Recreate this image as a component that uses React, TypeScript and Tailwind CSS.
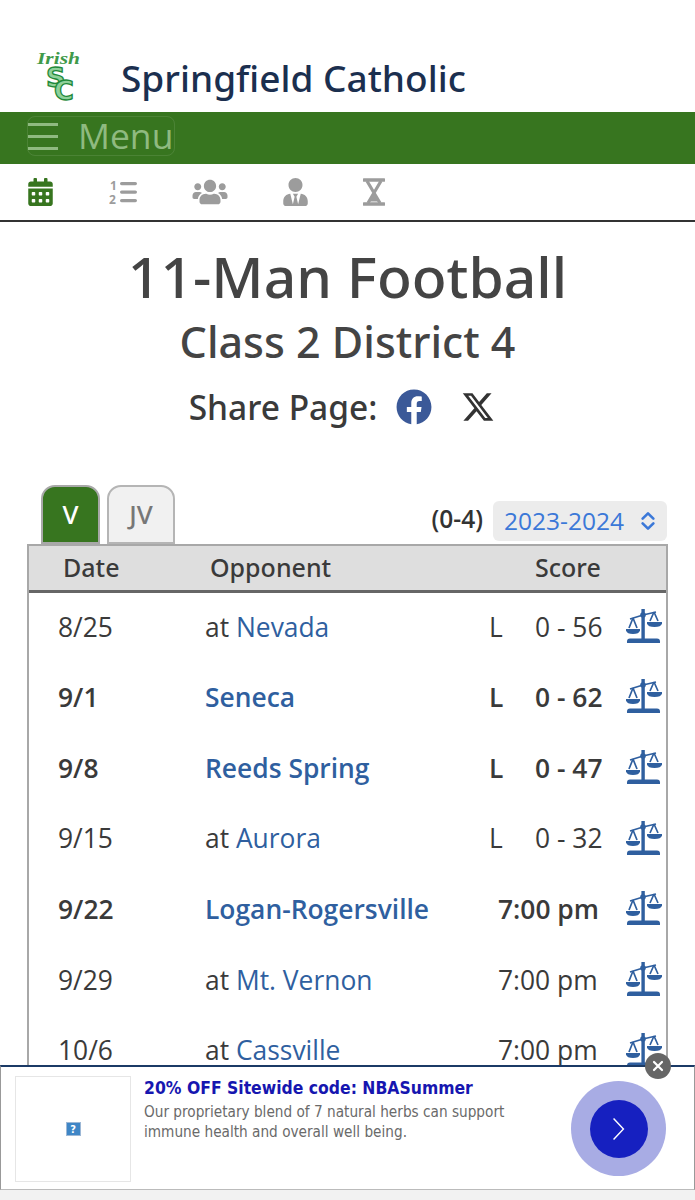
import React from 'react';
import { FaCalendarAlt, FaFacebook, FaUsers, FaUserTie } from 'react-icons/fa';
import { FaXTwitter } from 'react-icons/fa6';

interface Game {
  date: string;
  prefix?: string;
  opponent: string;
  result?: string;
  score: string;
  home?: boolean;
}

const games: Game[] = [
  { date: '8/25', prefix: 'at', opponent: 'Nevada', result: 'L', score: '0 - 56' },
  { date: '9/1', opponent: 'Seneca', result: 'L', score: '0 - 62', home: true },
  { date: '9/8', opponent: 'Reeds Spring', result: 'L', score: '0 - 47', home: true },
  { date: '9/15', prefix: 'at', opponent: 'Aurora', result: 'L', score: '0 - 32' },
  { date: '9/22', opponent: 'Logan-Rogersville', score: '7:00 pm', home: true },
  { date: '9/29', prefix: 'at', opponent: 'Mt. Vernon', score: '7:00 pm' },
  { date: '10/6', prefix: 'at', opponent: 'Cassville', score: '7:00 pm' },
  { date: '10/13', opponent: 'Monett', score: '7:00 pm', home: true },
];

const Logo = () => (
  <svg viewBox="0 0 50 54" className="h-[54px] w-[50px] shrink-0">
    <text x="4" y="14" fontFamily="'Liberation Serif', serif" fontStyle="italic" fontWeight="700" fontSize="16" fill="#3f9a4a" textLength="43" lengthAdjust="spacingAndGlyphs">
      Irish
    </text>
    <text x="13" y="37" fontFamily="'DejaVu Sans', sans-serif" fontWeight="700" fontSize="27" fill="#8fd19a" stroke="#1f8a3a" strokeWidth="1.3">
      S
    </text>
    <text x="21" y="50" fontFamily="'DejaVu Sans', sans-serif" fontWeight="700" fontSize="27" fill="#8fd19a" stroke="#1f8a3a" strokeWidth="1.3">
      C
    </text>
  </svg>
);

const ScaleIcon = () => (
  <svg viewBox="0 0 36 34" className="mt-[-3px] h-[34px] w-[36px]" fill="#2f5f9f">
    <rect x="15.4" y="0" width="3.4" height="30" />
    <circle cx="17" cy="6" r="2.8" />
    <path d="M1 34v-1.5q0-3 3-3h27q3 0 3 3V34z" />
    <path d="M4 10l13-4 13-3" fill="none" stroke="#2f5f9f" strokeWidth="1.6" />
    <path d="M7 9l-4 10M7 9l4 10M28 3l-4 9M28 3l4 9" fill="none" stroke="#2f5f9f" strokeWidth="1.7" />
    <path d="M0 20h14v1.5q-1 3.5-7 3.5t-7-3.5z" />
    <path d="M21 13h15v1.5q-1 3.5-7.5 3.5T21 14.500z" />
  </svg>
);

const ListIcon = () => (
  <svg viewBox="0 0 28 26" className="h-[26px] w-[28px]" fill="#9c9c9c">
    <text x="1" y="11" fontFamily="'Open Sans', sans-serif" fontWeight="700" fontSize="12">1</text>
    <text x="0" y="25" fontFamily="'Open Sans', sans-serif" fontWeight="700" fontSize="12">2</text>
    <rect x="11" y="3" width="17" height="3.2" rx="1.6" />
    <rect x="11" y="11.500" width="17" height="3.2" rx="1.6" />
    <rect x="11" y="20" width="17" height="3.2" rx="1.6" />
  </svg>
);

const HourglassIcon = () => (
  <svg viewBox="0 0 22 28" className="h-[28px] w-[22px]" fill="none" stroke="#9c9c9c">
    <path d="M1 2h20M1 26h20" strokeWidth="3.4" strokeLinecap="round" />
    <path d="M4 3l13 22M18 3L5 25" strokeWidth="3.2" />
    <path d="M7 23l4-6 4 6z" fill="#9c9c9c" strokeWidth="1" />
  </svg>
);

const GameRow = ({ game }: { game: Game }) => {
  const weight = game.home ? 'font-semibold' : 'font-normal';
  return (
    <div className={`grid h-[70.67px] grid-cols-[147px_284px_46px_91px_1fr] items-center pl-[29px] text-[26.4px] text-[#3a3a3a] ${weight}`}>
      <span>{game.date}</span>
      <span className="whitespace-nowrap">
        {game.prefix ? `${game.prefix} ` : ''}
        <span className="text-[#2f5f9f]">{game.opponent}</span>
      </span>
      {game.result ? (
        <>
          <span>{game.result}</span>
          <span className="whitespace-nowrap">{game.score}</span>
        </>
      ) : (
        <span className="col-span-2 whitespace-nowrap pl-[9px]">{game.score}</span>
      )}
      <ScaleIcon />
    </div>
  );
};

export default function App() {
  return (
    <div className="relative h-[1200px] w-[695px] overflow-hidden bg-white font-['Open_Sans',sans-serif] text-[#3a3a3a]">
      <header className="flex h-[112px] items-end gap-[38px] pb-[8px] pl-[33px]">
        <Logo />
        <h2 className="pb-[1px] text-[37px] leading-[50px] font-medium whitespace-nowrap text-[#1b2f4f] font-['Noto_Sans',sans-serif]">Springfield Catholic</h2>
      </header>

      <nav className="flex h-[52px] items-start bg-[#37751f] pt-[4px] pl-[27px]">
        <button className="flex h-[40px] w-[148px] items-center gap-[20px] rounded-[8px] border border-white/10 text-[#8fba80]">
          <span className="flex w-[30px] flex-col gap-[9px]">
            <span className="h-[3px] bg-[#8fba80]" />
            <span className="h-[3px] bg-[#8fba80]" />
            <span className="h-[3px] bg-[#8fba80]" />
          </span>
          <span className="text-[35.5px] leading-none">Menu</span>
        </button>
      </nav>

      <div className="flex h-[58px] items-center border-b-2 border-[#333] pb-[1px] text-[#9c9c9c]">
        <FaCalendarAlt className="ml-[28px] h-[28px] w-[25px] text-[#37751f]" />
        <div className="ml-[56px]"><ListIcon /></div>
        <FaUsers className="ml-[55px] h-[28px] w-[36px]" />
        <FaUserTie className="ml-[55px] h-[28px] w-[25px]" />
        <div className="ml-[55px]"><HourglassIcon /></div>
      </div>

      <div className="flex flex-col items-center font-['Noto_Sans',sans-serif]">
        <h1 className="mt-[17px] text-[57px] leading-[74px] font-medium text-[#444]">11-Man Football</h1>
        <h2 className="text-[43px] leading-[58px] font-medium text-[#444]">Class 2 District 4</h2>
        <div className="mt-[12px] mr-[11px] flex h-[48px] items-center">
          <span className="text-[33.5px] font-medium text-[#3a3a3a]">Share Page:</span>
          <FaFacebook className="ml-[19px] h-[36px] w-[36px] text-[#3b5998]" />
          <FaXTwitter className="ml-[29px] h-[34px] w-[34px] text-[#333]" />
        </div>
      </div>

      <div className="mx-[27px] mt-[54px] flex h-[59px] items-end">
        <button className="ml-[14px] flex h-[59px] w-[59px] items-center justify-center rounded-t-[14px] border-2 border-[#a8a8a8] bg-[#37751f] text-[26px] font-medium text-white font-['Noto_Sans',sans-serif]">
          V
        </button>
        <button className="ml-[7px] flex h-[59px] w-[68px] items-center justify-center rounded-t-[14px] border-2 border-[#b5b5b5] bg-[#f1f1f1] text-[26px] font-medium text-[#777] font-['Noto_Sans',sans-serif]">
          JV
        </button>
        <span className="mb-[6px] ml-auto text-[24.5px] font-semibold text-[#333]">(0-4)</span>
        <div className="mr-px mb-[3px] ml-[10px] flex h-[40px] w-[174px] items-center justify-between rounded-[6px] bg-[#ececec] pr-[11px] pl-[11px]">
          <span className="text-[24.5px] text-[#3b78d8]">2023-2024</span>
          <svg viewBox="0 0 18 26" className="h-[20px] w-[16px]" fill="none" stroke="#3b78d8" strokeWidth="3.4" strokeLinecap="round" strokeLinejoin="round">
            <path d="M2 10l7-7 7 7M2 16l7 7 7-7" />
          </svg>
        </div>
      </div>

      <div className="mx-[27px] h-[700px] border-x-2 border-t-2 border-[#a8a8a8]">
        <div className="grid h-[47px] grid-cols-[147px_325px_1fr] items-center border-b-[3px] border-[#666] bg-[#dedede] pl-[34px] text-[25px] font-medium text-[#3a3a3a] font-['Noto_Sans',sans-serif]">
          <span>Date</span>
          <span>Opponent</span>
          <span>Score</span>
        </div>
        <div className="mt-[-1px]">
          {games.map((game) => (
            <GameRow key={game.date} game={game} />
          ))}
        </div>
      </div>

      {/* sticky ad over the bottom of the table */}
      <aside className="absolute inset-x-0 bottom-0 h-[135px] bg-[#f2f2f2]">
        <div className="flex h-[125px] items-start border-x border-t-2 border-b border-x-[#999] border-t-[#1b3a66] border-b-[#bbb] bg-white font-['DejaVu_Sans_Condensed','DejaVu_Sans',sans-serif]">
          <div className="mt-[9px] ml-[14px] flex h-[106px] w-[116px] shrink-0 items-center justify-center border border-[#e6e6e6]">
            <span className="flex h-[14px] w-[15px] items-center justify-center border border-[#9db8d6] bg-[#3f86c6] text-[11px] leading-none font-bold text-white">?</span>
          </div>
          <div className="mt-[8px] ml-[13px] w-[400px]">
            <p className="text-[17.4px] leading-[26px] font-bold whitespace-nowrap text-[#1616b0]">20% OFF Sitewide code: NBASummer</p>
            <p className="mt-[2px] text-[15.2px] leading-[19.500px] whitespace-nowrap text-[#6a6a6a]">
              Our proprietary blend of 7 natural herbs can support
              <br />
              immune health and overall well being.
            </p>
          </div>
          <div className="mt-[14px] ml-[27px] flex h-[95px] w-[95px] shrink-0 items-center justify-center rounded-full bg-[#a8acE4]">
            <div className="flex h-[58px] w-[58px] items-center justify-center rounded-full bg-[#1620c0]">
              <svg viewBox="0 0 20 34" className="h-[24px] w-[15px]" fill="none" stroke="#fff" strokeWidth="2">
                <path d="M3 2l14 15L3 32" />
              </svg>
            </div>
          </div>
        </div>
        <button className="absolute top-[-12px] left-[645px] flex h-[26px] w-[26px] items-center justify-center rounded-full bg-[#666]">
          <svg viewBox="0 0 12 12" className="h-[12px] w-[12px]" stroke="#fff" strokeWidth="2.2" strokeLinecap="round">
            <path d="M2 2l8 8M10 2l-8 8" />
          </svg>
        </button>
      </aside>
    </div>
  );
}
